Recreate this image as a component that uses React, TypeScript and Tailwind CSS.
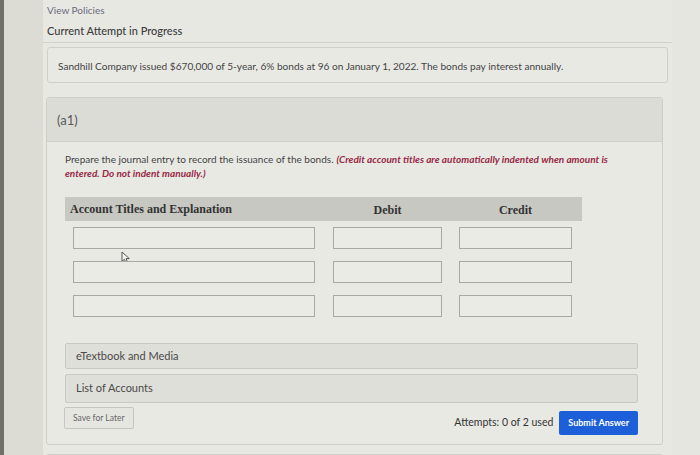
import React from 'react';

// Journal entry question screen (a1)

const ROWS = [0, 1, 2];

function Cursor() {
  return (
    <svg width="10" height="13" viewBox="0 0 10 13" className="absolute left-[56px] top-[24px]">
      <path d="M1 1 L1 10.5 L3.4 8.3 L5.2 12 L6.7 11.3 L5 7.6 L8.3 7.6 Z" fill="#f4f4f0" stroke="#444" strokeWidth="0.9" strokeLinejoin="round" />
    </svg>
  );
}

function EntryRow({ index }: { index: number }) {
  return (
    <div className="relative flex gap-[18px] pl-[8px]">
      <div className="w-[242px] h-[22px] border border-[#a9a9a4] bg-[#ebebe6]" />
      <div className="w-[109px] h-[22px] border border-[#a9a9a4] bg-[#ebebe6]" />
      <div className="ml-[-1px] w-[113px] h-[22px] border border-[#a9a9a4] bg-[#ebebe6]" />
      {index === 0 && <Cursor />}
    </div>
  );
}

function LinkBox({ label, tall }: { label: string; tall?: boolean }) {
  return (
    <div className={`w-[573px] ${tall ? 'h-[29px]' : 'h-[26px]'} flex items-center pl-[10px] border border-[#c9c9c3] rounded-[2px] bg-[#dfdfd9] text-[11px] text-[#4a4a4a]`}>
      {label}
    </div>
  );
}

export default function App() {
  return (
    <div className="w-[700px] h-[455px] overflow-hidden flex bg-[#e3e3dd] font-['Lato','Open_Sans',sans-serif]">
      <div className="w-[4px] shrink-0 bg-[#707069]" />
      <div className="w-[39px] shrink-0 bg-[#dcdcd5]" />

      <div className="w-[629px] shrink-0 bg-[#e8e8e3] flex flex-col">
        {/* top bar */}
        <div className="h-[43px] shrink-0 border-b border-[#d2d2cc] pl-[4px] flex flex-col">
          <div className="mt-[3px] text-[10px] leading-[14px] text-[#6b6a80]">View Policies</div>
          <div className="mt-[7px] text-[11px] leading-[14px] font-medium text-[#3d3d3d]">Current Attempt in Progress</div>
        </div>

        {/* problem statement */}
        <div className="mt-[4px] ml-[4px] w-[621px] h-[36px] shrink-0 border border-[#cfcfc9] rounded-[3px] bg-[#e9e9e4] flex items-center pl-[10px] pt-[3px]">
          <p className="text-[10.1px] text-[#444]">
            Sandhill Company issued $670,000 of 5-year, 6% bonds at 96 on January 1, 2022. The bonds pay interest annually.
          </p>
        </div>

        {/* part a1 */}
        <div className="mt-[14px] ml-[3px] w-[617px] shrink-0 border border-[#cfcfc9] rounded-[3px] bg-[#e9e9e4] flex flex-col">
          <div className="h-[44px] bg-[#dcdcd6] border-b border-[#d0d0ca] flex items-center pl-[10px] pt-[2px] rounded-t-[3px]">
            <span className="text-[13px] text-[#5a5a5a]">(a1)</span>
          </div>

          <div className="pl-[18px] pr-[22px] pt-[10px] pb-[9px] flex flex-col">
            <div className="text-[10px] leading-[14px] text-[#444]">
              <div className="flex gap-[3px] whitespace-nowrap">
                <span>Prepare the journal entry to record the issuance of the bonds.</span>
                <span className="font-bold italic text-[#982a45]">(Credit account titles are automatically indented when amount is</span>
              </div>
              <div className="font-bold italic text-[#982a45]">entered. Do not indent manually.)</div>
            </div>

            {/* table header */}
            <div className="mt-[17px] w-[517px] h-[24px] bg-[#c8c8c3] flex items-center pl-[5px] font-['Liberation_Serif',serif] font-bold text-[12px] text-[#333]">
              <div className="w-[263px]">Account Titles and Explanation</div>
              <div className="w-[109px] text-center pt-[2px]">Debit</div>
              <div className="ml-[17px] w-[113px] text-center pt-[2px]">Credit</div>
            </div>

            <div className="mt-[6px] flex flex-col gap-[12px]">
              {ROWS.map((r) => (
                <EntryRow key={r} index={r} />
              ))}
            </div>

            <div className="mt-[26px] flex flex-col gap-[5px]">
              <LinkBox label="eTextbook and Media" />
              <LinkBox label="List of Accounts" tall />
            </div>

            <div className="mt-[4px] w-[573px] flex items-start justify-between">
              <button className="-ml-[1px] h-[22px] px-[8px] border border-[#c6c6c0] rounded-[2px] bg-[#e6e6e1] text-[8.5px] text-[#666]">
                Save for Later
              </button>
              <div className="mt-[4px] flex items-center gap-[6px]">
                <span className="text-[10.5px] text-[#333]">Attempts: 0 of 2 used</span>
                <button className="h-[24px] px-[9px] rounded-[2px] bg-[#1d5fd8] text-white text-[9px] font-bold">
                  Submit Answer
                </button>
              </div>
            </div>
          </div>
        </div>

        <div className="mt-[9px] ml-[3px] w-[617px] h-[20px] shrink-0 border border-[#cfcfc9] rounded-t-[3px] bg-[#e9e9e4]" />
      </div>

      <div className="flex-1 bg-[#e6e6e0]" />
    </div>
  );
}
